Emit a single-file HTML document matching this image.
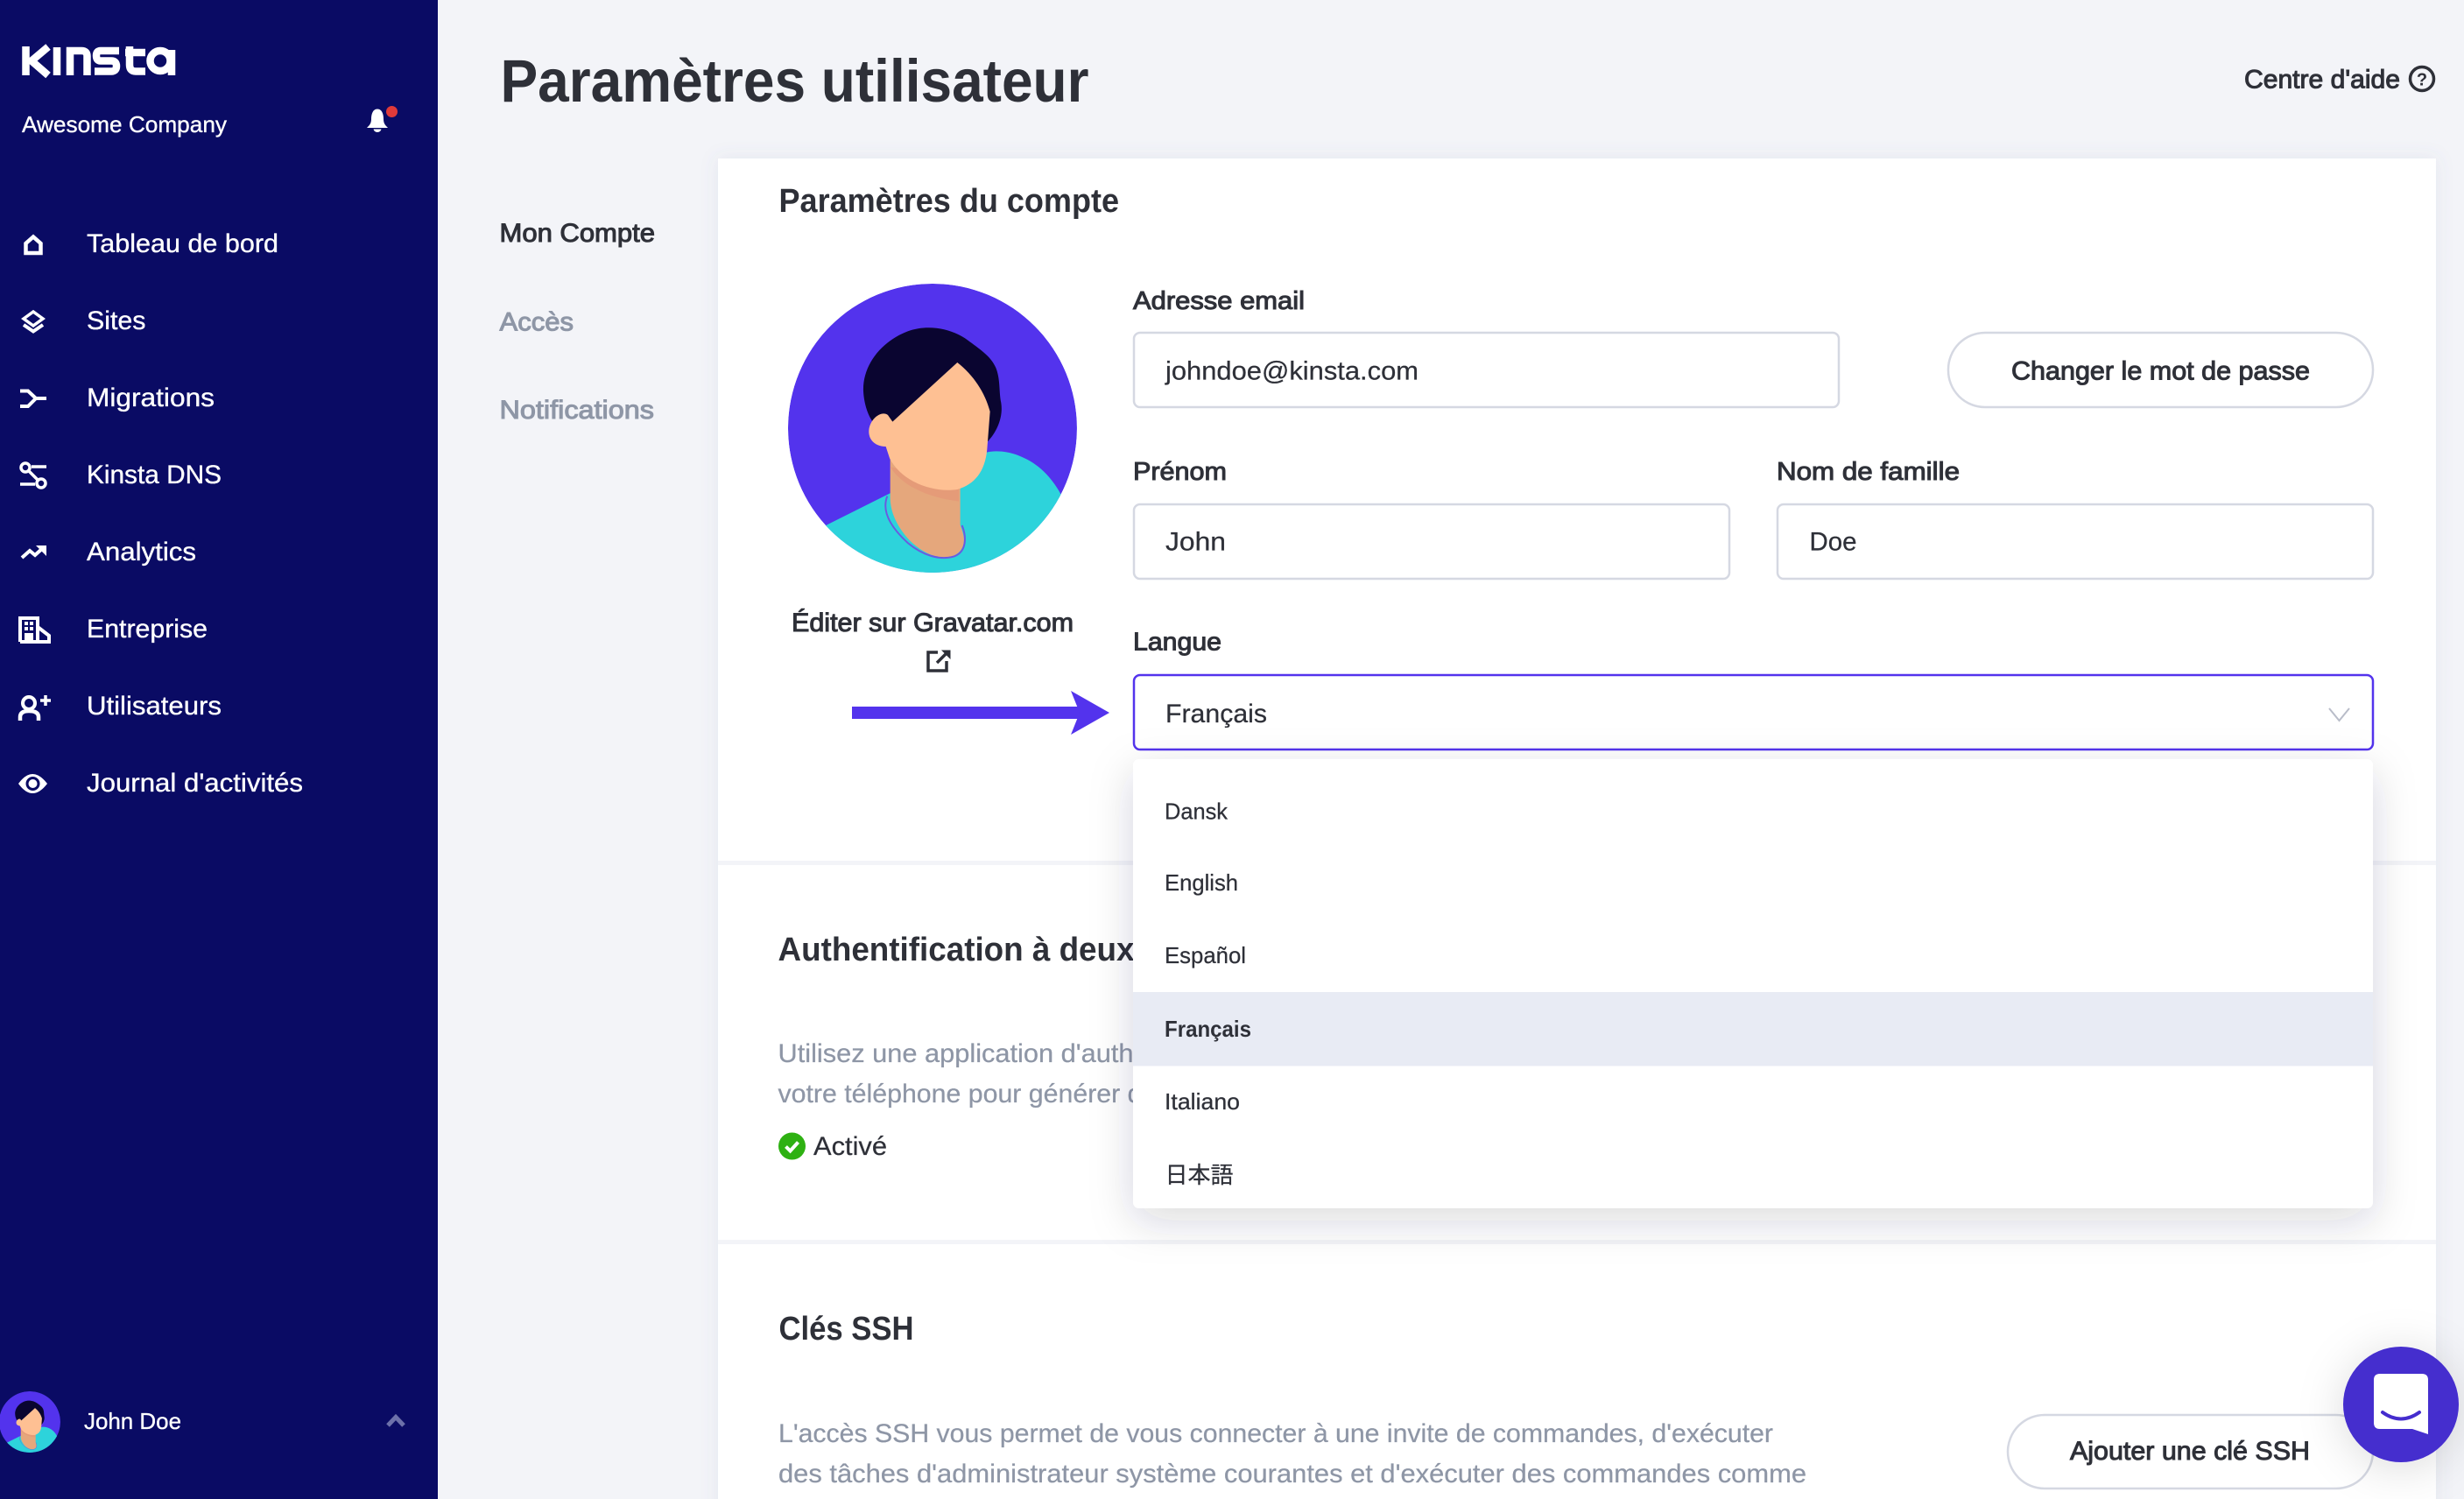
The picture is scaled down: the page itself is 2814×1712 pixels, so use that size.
<!DOCTYPE html>
<html lang="fr">
<head>
<meta charset="utf-8">
<title>Paramètres utilisateur</title>
<style>
html,body{margin:0;padding:0;background:#f3f4f8;width:2814px;height:1712px;overflow:hidden}
svg{display:block}
text{font-family:"Liberation Sans","Noto Sans CJK JP",sans-serif;white-space:pre}
.w{fill:#fff;stroke:#fff;stroke-width:.35px}
.d{fill:#2e3038;stroke:#2e3038;stroke-width:.25px}
.g{fill:#8e96a6;stroke:#8e96a6;stroke-width:.25px}
.h{fill:#2e3038}
.md{fill:#2e3038;stroke:#2e3038;stroke-width:1.05px}
.mg{fill:#8e96a6;stroke:#8e96a6;stroke-width:1.05px}
.ic{fill:none;stroke:#fff;stroke-linejoin:miter}
</style>
</head>
<body>
<svg xmlns="http://www.w3.org/2000/svg" width="2814" height="1712" viewBox="0 0 2814 1712">
<defs>
<filter id="cardS" x="-5%" y="-5%" width="110%" height="110%"><feDropShadow dx="0" dy="0" stdDeviation="10" flood-color="#5a6a9c" flood-opacity=".10"/></filter>
<filter id="dropS" x="-15%" y="-30%" width="130%" height="160%"><feDropShadow dx="0" dy="14" stdDeviation="24" flood-color="#2e3038" flood-opacity=".17"/></filter>
<filter id="chatS" x="-80%" y="-80%" width="260%" height="260%"><feDropShadow dx="0" dy="6" stdDeviation="26" flood-color="#1a1c30" flood-opacity=".14"/></filter>
<clipPath id="avc"><circle cx="615" cy="567" r="495"/></clipPath>
<g id="avatar" clip-path="url(#avc)">
  <circle cx="615" cy="567" r="495" fill="#5333ed"/>
  <path d="M378,440C375,350 440,270 530,235C600,210 680,225 735,265C775,295 815,320 832,360C848,400 842,440 850,480C858,530 835,580 805,612L480,560L410,545C392,520 380,480 378,440Z" fill="#0a0530"/>
  <path d="M240,905L470,790L700,780L800,650C830,642 880,645 930,670C985,695 1030,745 1058,800L1130,1100H240Z" fill="#2dd3db"/>
  <path d="M470,670V795C468,850 490,900 535,950C575,990 620,1012 665,1010C705,1005 728,975 722,940C718,915 710,905 710,895V760Z" fill="#e5a77c"/>
  <path d="M470,700C510,765 600,805 705,818V770L560,720Z" fill="#e59b78"/>
  <path d="M460,800C440,850 470,905 530,960C580,1002 640,1022 690,1006C732,990 732,940 716,900" fill="none" stroke="#6a5be0" stroke-width="6"/>
  <path d="M478,545L700,342C755,385 795,445 812,510L802,640C795,715 760,760 700,777C610,790 505,745 468,670L455,630C420,630 395,608 397,575C400,535 440,505 462,522Z" fill="#fec093"/>
</g>
</defs>

<rect width="2814" height="1712" fill="#f3f4f8"/>
<!-- Sidebar -->
<rect width="500" height="1712" fill="#0a0b64"/>
<g fill="none" stroke="#fff" stroke-width="8.5">
  <path d="M29.500,53V86M55,53.500L36,69.500L55,86"/>
  <path d="M65,54V86"/>
  <path d="M80,86V58H93Q99.500,58 99.500,64V86"/>
  <path d="M136,58H115Q110,58 110,63.500Q110,69.500 115,69.500H127Q133,69.500 133,75.500Q133,81.500 127,81.500H108"/>
  <path d="M148,53V74Q148,81.500 155,81.500H166M143,60H166"/>
  <circle cx="183" cy="69.500" r="11.500"/>
  <path d="M196,57V86"/>
</g>
<text x="25" y="151" class="w" font-size="26" textLength="234" lengthAdjust="spacingAndGlyphs">Awesome Company</text>
<path d="M431,124.500C436,124.500 438,130 438,136C438,141 440,143 443,146H419C422,143 424,141 424,136C424,130 426,124.500 431,124.500ZM426.500,147.500H435.500Q434.500,151 431,151Q427.500,151 426.500,147.500Z" fill="#fff"/>
<circle cx="447.500" cy="127.500" r="6.500" fill="#e03a3a"/>

<!-- nav icons -->
<path d="M29.500,289V278L38,270.500L46.500,278V289Z" class="ic" stroke-width="4.500"/>
<path d="M38,356L49,364L38,372L27,364Z" class="ic" stroke-width="3.500"/>
<path d="M27,371L38,378.500L49,371" class="ic" stroke-width="4"/>
<path d="M23,446.500H32L41,455H53M41,455L32,464H23" class="ic" stroke-width="4"/>
<g class="ic" stroke-width="3.500">
  <circle cx="29" cy="534" r="5"/><circle cx="47" cy="552" r="5"/>
  <path d="M33,538L43,548M36,533H53M23,553H40"/>
</g>
<path d="M25,637L34,629L40,634L50,625" class="ic" stroke-width="4"/>
<path d="M41,623H53V635Z" fill="#fff"/>
<path d="M23,733V706H43V733M43,716L56,726V733H23" class="ic" stroke-width="4"/>
<path d="M28,710h4v4h-4zM34,710h4v4h-4zM28,716h4v4h-4zM34,716h4v4h-4zM28,723h10v10h-10z" fill="#fff"/>
<circle cx="33" cy="803" r="7" class="ic" stroke-width="4"/>
<path d="M23,823V819Q23,812 33,812Q44,812 44,819V823" class="ic" stroke-width="4.500"/>
<path d="M46,800H58M52,794V806" class="ic" stroke-width="3.500"/>
<path d="M21,895Q37,873 54,895Q37,917 21,895Z" fill="#fff"/>
<circle cx="37.500" cy="895" r="8" fill="#0a0b64"/><circle cx="37.500" cy="895" r="5" fill="#fff"/>

<g font-size="30">
<text x="99" y="288" class="w" textLength="219" lengthAdjust="spacingAndGlyphs">Tableau de bord</text>
<text x="99" y="376" class="w" textLength="67.500" lengthAdjust="spacingAndGlyphs">Sites</text>
<text x="99" y="464" class="w" textLength="146" lengthAdjust="spacingAndGlyphs">Migrations</text>
<text x="99" y="552" class="w" textLength="154" lengthAdjust="spacingAndGlyphs">Kinsta DNS</text>
<text x="99" y="640" class="w" textLength="125" lengthAdjust="spacingAndGlyphs">Analytics</text>
<text x="99" y="728" class="w" textLength="138" lengthAdjust="spacingAndGlyphs">Entreprise</text>
<text x="99" y="816" class="w" textLength="154" lengthAdjust="spacingAndGlyphs">Utilisateurs</text>
<text x="99" y="904" class="w" textLength="247" lengthAdjust="spacingAndGlyphs">Journal d'activités</text>
</g>

<use href="#avatar" transform="translate(-9.500,1583.900) scale(.0707)"/>
<text x="96" y="1632" class="w" font-size="26" textLength="111" lengthAdjust="spacingAndGlyphs">John Doe</text>
<path d="M443,1628L452,1618.500L461,1628" fill="none" stroke="#6d71aa" stroke-width="5"/>

<!-- Header -->
<text x="571.500" y="116" class="h" font-size="69" font-weight="700" textLength="672" lengthAdjust="spacingAndGlyphs">Paramètres utilisateur</text>
<text x="2563" y="100.500" class="md" font-size="30" textLength="178" lengthAdjust="spacingAndGlyphs">Centre d'aide</text>
<circle cx="2766" cy="90" r="13.500" fill="none" stroke="#2e3038" stroke-width="3.500"/>
<text x="2766" y="97.500" class="h" font-size="20" font-weight="700" text-anchor="middle">?</text>

<!-- sub nav -->
<text x="570.500" y="276" class="md" font-size="30" textLength="177.500" lengthAdjust="spacingAndGlyphs">Mon Compte</text>
<text x="570.500" y="377.500" class="mg" font-size="30" textLength="84.500" lengthAdjust="spacingAndGlyphs">Accès</text>
<text x="570.500" y="478" class="mg" font-size="30" textLength="176.500" lengthAdjust="spacingAndGlyphs">Notifications</text>

<!-- Card -->
<rect x="820" y="181" width="1962" height="1560" fill="#fff" filter="url(#cardS)"/>
<text x="889.500" y="242" class="h" font-size="38" font-weight="700" textLength="388.500" lengthAdjust="spacingAndGlyphs">Paramètres du compte</text>

<use href="#avatar" transform="translate(860,300) scale(.3333)"/>
<text x="904" y="721" class="md" font-size="30" textLength="322" lengthAdjust="spacingAndGlyphs">Éditer sur Gravatar.com</text>
<path d="M1071,745H1060V766H1081V755M1070,757L1082,745" fill="none" stroke="#2e3038" stroke-width="3.500"/>
<path d="M1075,742.500H1085.500V753Z" fill="#2e3038"/>

<rect x="973" y="807" width="262" height="14" fill="#5333ed"/>
<path d="M1267,814L1223,789L1233,814L1223,839Z" fill="#5333ed"/>

<!-- Form -->
<text x="1294" y="353" class="md" font-size="29" textLength="196" lengthAdjust="spacingAndGlyphs">Adresse email</text>
<rect x="1295" y="380" width="805" height="85" rx="7" fill="#fff" stroke="#d5d8e2" stroke-width="2.500"/>
<text x="1331" y="433.500" class="d" font-size="30" textLength="289" lengthAdjust="spacingAndGlyphs">johndoe@kinsta.com</text>
<rect x="2225" y="380" width="485" height="85" rx="42" fill="#fff" stroke="#d5d8e2" stroke-width="2.500"/>
<text x="2297" y="433.500" class="md" font-size="30" textLength="341" lengthAdjust="spacingAndGlyphs">Changer le mot de passe</text>

<text x="1294" y="548" class="md" font-size="29" textLength="107" lengthAdjust="spacingAndGlyphs">Prénom</text>
<text x="2029" y="548" class="md" font-size="29" textLength="209" lengthAdjust="spacingAndGlyphs">Nom de famille</text>
<rect x="1295" y="576" width="680" height="85" rx="7" fill="#fff" stroke="#d5d8e2" stroke-width="2.500"/>
<rect x="2030" y="576" width="680" height="85" rx="7" fill="#fff" stroke="#d5d8e2" stroke-width="2.500"/>
<text x="1331" y="628.500" class="d" font-size="30" textLength="69" lengthAdjust="spacingAndGlyphs">John</text>
<text x="2066.500" y="628.500" class="d" font-size="30" textLength="54" lengthAdjust="spacingAndGlyphs">Doe</text>

<text x="1294" y="742.500" class="md" font-size="29" textLength="101" lengthAdjust="spacingAndGlyphs">Langue</text>
<rect x="1295" y="771" width="1415" height="85" rx="7" fill="#fff" stroke="#5333ed" stroke-width="2.500"/>
<text x="1331" y="825" class="d" font-size="30" textLength="116" lengthAdjust="spacingAndGlyphs">Français</text>
<path d="M2660,809L2671.500,823L2683,809" fill="none" stroke="#b9bdc9" stroke-width="2"/>

<!-- dividers -->
<rect x="820" y="983" width="1962" height="5" fill="#f3f4f8"/>
<rect x="820" y="1416" width="1962" height="5" fill="#f3f4f8"/>

<text x="888.500" y="1097" class="h" font-size="38" font-weight="700" textLength="407" lengthAdjust="spacingAndGlyphs">Authentification à deux</text>
<text x="888.500" y="1213" class="g" font-size="30" textLength="406" lengthAdjust="spacingAndGlyphs">Utilisez une application d'auth</text>
<text x="888.500" y="1259" class="g" font-size="30" textLength="416" lengthAdjust="spacingAndGlyphs">votre téléphone pour générer d</text>
<circle cx="904.500" cy="1309" r="15.500" fill="#2eb112"/>
<path d="M897.500,1309.500L902.500,1314.500L911.500,1304.500" fill="none" stroke="#fff" stroke-width="4"/>
<text x="929" y="1319" class="d" font-size="30" textLength="84" lengthAdjust="spacingAndGlyphs">Activé</text>

<text x="889.500" y="1530" class="h" font-size="38" font-weight="700" textLength="154" lengthAdjust="spacingAndGlyphs">Clés SSH</text>
<text x="889" y="1647" class="g" font-size="30" textLength="1136" lengthAdjust="spacingAndGlyphs">L'accès SSH vous permet de vous connecter à une invite de commandes, d'exécuter</text>
<text x="889" y="1693" class="g" font-size="30" textLength="1174" lengthAdjust="spacingAndGlyphs">des tâches d'administrateur système courantes et d'exécuter des commandes comme</text>
<rect x="2293" y="1616" width="417" height="84" rx="42" fill="#fff" stroke="#d5d8e2" stroke-width="2.500"/>
<text x="2364" y="1667" class="md" font-size="30" textLength="274" lengthAdjust="spacingAndGlyphs">Ajouter une clé SSH</text>

<!-- Dropdown -->
<rect x="1294" y="867" width="1416" height="513" rx="7" fill="#fff" filter="url(#dropS)"/>
<rect x="1294" y="1133" width="1416" height="84.500" fill="#e8ebf4"/>
<g font-size="26">
<text x="1330" y="935.500" class="d" textLength="72" lengthAdjust="spacingAndGlyphs">Dansk</text>
<text x="1330" y="1017" class="d" textLength="84" lengthAdjust="spacingAndGlyphs">English</text>
<text x="1330" y="1100" class="d" textLength="93" lengthAdjust="spacingAndGlyphs">Español</text>
<text x="1330" y="1184" class="h" font-weight="700" textLength="99" lengthAdjust="spacingAndGlyphs">Français</text>
<text x="1330" y="1267" class="d" textLength="86" lengthAdjust="spacingAndGlyphs">Italiano</text>
<text x="1330.500" y="1351" class="d" textLength="78" lang="ja">日本語</text>
</g>

<!-- Chat -->
<circle cx="2742" cy="1604" r="66" fill="#452dce" filter="url(#chatS)"/>
<path d="M2718,1569H2766Q2773,1569 2773,1576V1638L2755,1632H2718Q2711,1632 2711,1625V1576Q2711,1569 2718,1569Z" fill="#fff"/>
<path d="M2721,1613Q2742,1628 2763,1613" fill="none" stroke="#452dce" stroke-width="4" stroke-linecap="round"/>
</svg>
</body>
</html>
